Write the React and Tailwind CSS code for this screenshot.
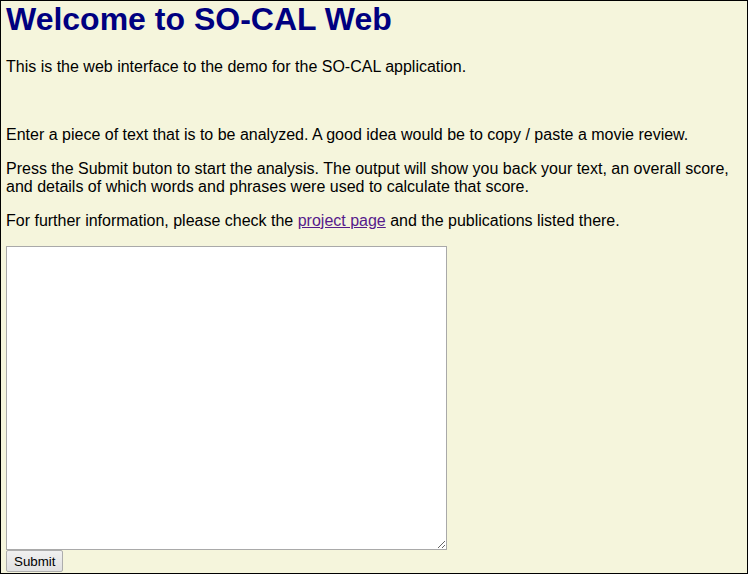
export default function App() {
  return (
    <div className="h-[574px] w-[748px] overflow-hidden border border-black bg-[#f5f5dc] pl-[5px] text-[16px] text-black [font-family:'Liberation_Sans',Arial,sans-serif]">
      <h1 className="m-0 text-[32px] font-bold leading-[37px] text-[#000080]">Welcome to SO-CAL Web</h1>
      <p className="mt-[20px] leading-[18px]">This is the web interface to the demo for the SO-CAL application.</p>
      <p className="mt-[50px] leading-[18px]">Enter a piece of text that is to be analyzed. A good idea would be to copy / paste a movie review.</p>
      <p className="mt-[16px] leading-[18px]">Press the Submit buton to start the analysis. The output will show you back your text, an overall score, and details of which words and phrases were used to calculate that score.</p>
      <p className="mt-[16px] leading-[18px]">
        For further information, please check the{" "}
        <a href="#" className="text-[#551a8b] underline">project page</a> and the publications listed there.
      </p>
      <div className="mt-[16px] flex flex-col items-start">
        <textarea className="block h-[304px] w-[441px] resize border border-[#a9a9a9] bg-white" />
        <button className="h-[22px] rounded-[2px] border border-[#adadad] bg-[linear-gradient(#f0f0f0,#e1e1e1)] px-[7px] text-[13.33px] leading-[15px] text-black [font-family:'Liberation_Sans',Arial,sans-serif]">Submit</button>
      </div>
    </div>
  );
}
